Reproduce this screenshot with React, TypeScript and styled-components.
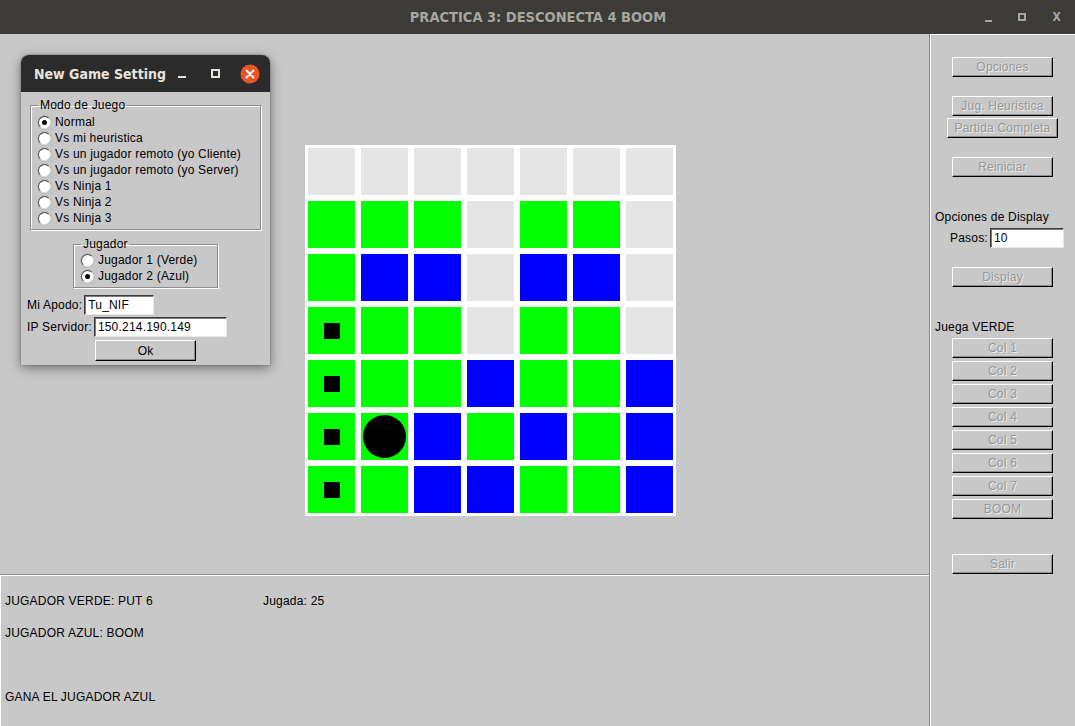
import React from 'react';
import styled, { createGlobalStyle, css } from 'styled-components';

type Cell = 'E' | 'G' | 'B';
type Mark = 'sq' | 'dot' | undefined;

const BOARD: string[] = [
  'EEEEEEE',
  'GGGEGGE',
  'GBBEBBE',
  'GGGEGGE',
  'GGGBGGB',
  'GGBGBGB',
  'GGBBGGB',
];

const MARKS: Record<string, Mark> = {
  '3-0': 'sq',
  '4-0': 'sq',
  '5-0': 'sq',
  '6-0': 'sq',
  '5-1': 'dot',
};

const MODES = [
  'Normal',
  'Vs mi heuristica',
  'Vs un jugador remoto (yo Cliente)',
  'Vs un jugador remoto (yo Server)',
  'Vs Ninja 1',
  'Vs Ninja 2',
  'Vs Ninja 3',
];

const App: React.FC = () => {
  return (
    <Screen>
      <GlobalStyle />
      <TitleBar>
        <TitleText>PRACTICA 3: DESCONECTA 4 BOOM</TitleText>
        <WinControls>
          <MinGlyph />
          <MaxGlyph />
          <CloseGlyph>X</CloseGlyph>
        </WinControls>
      </TitleBar>

      <Body>
        <LeftColumn>
          <Canvas>
            <BoardFrame>
              {BOARD.map((row, r) =>
                row.split('').map((c, col) => {
                  const mark = MARKS[`${r}-${col}`];
                  return (
                    <BoardCell key={`${r}-${col}`} $kind={c as Cell}>
                      {mark === 'sq' && <Square />}
                      {mark === 'dot' && <Disc />}
                    </BoardCell>
                  );
                })
              )}
            </BoardFrame>
          </Canvas>
          <LogPanel>
            <LogRow>
              <LogLabel>JUGADOR VERDE: PUT 6</LogLabel>
              <span>Jugada: 25</span>
            </LogRow>
            <LogRow>JUGADOR AZUL: BOOM</LogRow>
            <LogRow />
            <LogRow>GANA EL JUGADOR AZUL</LogRow>
          </LogPanel>
        </LeftColumn>

        <SidePanel>
          <TkButton $top={23}>Opciones</TkButton>
          <TkButton $top={19}>Jug. Heuristica</TkButton>
          <TkButton $top={2} $wide>Partida Completa</TkButton>
          <TkButton $top={19}>Reiniciar</TkButton>
          <SideLabel $top={33}>Opciones de Display</SideLabel>
          <PasosRow>
            <span>Pasos:</span>
            <Entry $w={74} defaultValue="10" />
          </PasosRow>
          <TkButton $top={19}>Display</TkButton>
          <SideLabel $top={33}>Juega VERDE</SideLabel>
          {[1, 2, 3, 4, 5, 6, 7].map((n) => (
            <TkButton key={n} $top={n === 1 ? 4 : 3}>
              Col {n}
            </TkButton>
          ))}
          <TkButton $top={3}>BOOM</TkButton>
          <TkButton $top={35}>Salir</TkButton>
        </SidePanel>
      </Body>

      <Dialog>
        <DialogTitleBar>
          <DialogTitle>New Game Setting</DialogTitle>
          <DialogMin />
          <DialogMax />
          <DialogClose>
            <svg width="20" height="20" viewBox="0 0 20 20">
              <circle cx="10" cy="10" r="9.5" fill="#e95420" />
              <path d="M6.5 6.5 L13.5 13.5 M13.5 6.5 L6.5 13.5" stroke="#fff" strokeWidth="2" strokeLinecap="round" />
            </svg>
          </DialogClose>
        </DialogTitleBar>
        <DialogBody>
          <Group $w={231} $padTop={2} $padBottom={3}>
            <Legend>Modo de Juego</Legend>
            {MODES.map((m, i) => (
              <RadioRow key={m}>
                <Radio $on={i === 0} />
                {m}
              </RadioRow>
            ))}
          </Group>
          <Group $w={145} $center $top={7} $padTop={1} $padBottom={3}>
            <Legend>Jugador</Legend>
            <RadioRow>
              <Radio />
              Jugador 1 (Verde)
            </RadioRow>
            <RadioRow>
              <Radio $on />
              Jugador 2 (Azul)
            </RadioRow>
          </Group>
          <FieldRow $top={7}>
            <span>Mi Apodo:</span>
            <Entry $w={70} defaultValue="Tu_NIF" />
          </FieldRow>
          <FieldRow $top={2}>
            <span>IP Servidor:</span>
            <Entry $w={133} defaultValue="150.214.190.149" />
          </FieldRow>
          <OkButton>Ok</OkButton>
        </DialogBody>
      </Dialog>
    </Screen>
  );
};

export default App;

const GlobalStyle = createGlobalStyle`
  html, body {
    margin: 0;
    padding: 0;
    background: #c8c8c8;
  }
  body {
    font-family: "Liberation Sans", Arial, sans-serif;
    font-size: 12px;
    letter-spacing: 0.2px;
    color: #000;
  }
`;

const Screen = styled.div`
  position: relative;
  width: 1075px;
  height: 726px;
  overflow: hidden;
  display: flex;
  flex-direction: column;
  background: #c8c8c8;
`;

const TitleBar = styled.div`
  height: 34px;
  flex: none;
  background: #3c3b37;
  display: flex;
  align-items: center;
  justify-content: center;
  position: relative;
`;

const TitleText = styled.div`
  font-family: "DejaVu Sans Condensed", "DejaVu Sans", sans-serif;
  font-weight: bold;
  font-size: 14.5px;
  letter-spacing: 0;
  color: #a6a6a2;
  margin-left: 1px;
`;

const WinControls = styled.div`
  position: absolute;
  right: 14px;
  top: 0;
  height: 34px;
  display: flex;
  align-items: center;
  gap: 26px;
`;

const MinGlyph = styled.span`
  width: 7px;
  height: 2px;
  margin-top: 7px;
  background: #a6a6a2;
`;

const MaxGlyph = styled.span`
  width: 4px;
  height: 4px;
  border: 2px solid #a6a6a2;
`;

const CloseGlyph = styled.span`
  font-family: "DejaVu Sans Condensed", "DejaVu Sans", sans-serif;
  font-weight: bold;
  font-size: 12px;
  color: #a6a6a2;
`;

const Body = styled.div`
  flex: 1;
  display: flex;
  min-height: 0;
`;

const LeftColumn = styled.div`
  width: 929px;
  display: flex;
  flex-direction: column;
`;

const Canvas = styled.div`
  height: 540px;
  box-sizing: border-box;
  padding: 111px 0 0 305px;
`;

const BoardFrame = styled.div`
  display: inline-grid;
  grid-template-columns: repeat(7, 47px);
  grid-auto-rows: 47px;
  gap: 6px;
  padding: 3px;
  background: #fff;
`;

const cellColors: Record<Cell, string> = {
  E: '#e5e5e5',
  G: '#00ff00',
  B: '#0000ff',
};

const BoardCell = styled.div<{ $kind: Cell }>`
  background: ${(p) => cellColors[p.$kind]};
  display: flex;
  align-items: center;
  justify-content: center;
`;

const Square = styled.div`
  width: 16px;
  height: 16px;
  background: #000;
`;

const Disc = styled.div`
  width: 43px;
  height: 43px;
  border-radius: 50%;
  background: #000;
`;

const LogPanel = styled.div`
  flex: 1;
  border-top: 1px solid #8c8c8c;
  box-shadow: inset 1px 1px 0 #fff;
  padding: 10px 0 0 5px;
`;

const LogRow = styled.div`
  height: 32px;
  display: flex;
  align-items: center;
`;

const LogLabel = styled.span`
  width: 258px;
`;

const SidePanel = styled.div`
  flex: 1;
  border-left: 1px solid #8c8c8c;
  box-shadow: inset 1px 1px 0 #fff;
  display: flex;
  flex-direction: column;
  align-items: center;
`;

const raised = css`
  box-sizing: border-box;
  background: #c8c8c8;
  border: 1px solid;
  border-color: #fff #000 #000 #fff;
  box-shadow: inset -1px -1px 0 #8c8c8c;
  font-family: "Liberation Sans", Arial, sans-serif;
  font-size: 12px;
  padding: 0;
  display: flex;
  align-items: center;
  justify-content: center;
`;

const TkButton = styled.div<{ $top: number; $wide?: boolean }>`
  ${raised};
  width: ${(p) => (p.$wide ? 111 : 101)}px;
  height: 20px;
  margin-top: ${(p) => p.$top}px;
  color: #979797;
  text-shadow: 1px 1px 0 #ececec;
`;

const SideLabel = styled.div<{ $top: number }>`
  align-self: flex-start;
  margin: ${(p) => p.$top}px 0 0 5px;
  line-height: 14px;
`;

const PasosRow = styled.div`
  align-self: flex-start;
  margin: 4px 0 0 20px;
  display: flex;
  align-items: center;
  gap: 2px;
`;

const Entry = styled.input<{ $w: number }>`
  box-sizing: border-box;
  width: ${(p) => p.$w}px;
  height: 20px;
  margin: 0;
  padding: 0 0 0 3px;
  background: #fff;
  border: 1px solid;
  border-color: #3a3a3a #e8e8e8 #e8e8e8 #3a3a3a;
  box-shadow: inset 1px 1px 0 #7a7a7a;
  font-family: "Liberation Sans", Arial, sans-serif;
  font-size: 12px;
  letter-spacing: 0.2px;
  color: #000;
  outline: none;
`;

const Dialog = styled.div`
  position: absolute;
  left: 21px;
  top: 55px;
  width: 249px;
  border-radius: 8px 8px 0 0;
  background: #c8c8c8;
  box-shadow: 0 3px 12px rgba(0, 0, 0, 0.45), 0 0 2px rgba(0, 0, 0, 0.4);
  overflow: hidden;
`;

const DialogTitleBar = styled.div`
  height: 37px;
  background: #2b2b2b;
  display: flex;
  align-items: center;
  padding: 0 0 0 13px;
`;

const DialogTitle = styled.div`
  font-family: "DejaVu Sans Condensed", "DejaVu Sans", sans-serif;
  font-weight: bold;
  font-size: 14px;
  letter-spacing: 0;
  color: #e6e3dc;
  width: 144px;
`;

const DialogMin = styled.span`
  width: 8px;
  height: 2px;
  margin-top: 6px;
  background: #e6e3dc;
`;

const DialogMax = styled.span`
  width: 5px;
  height: 5px;
  margin-left: 25px;
  border: 2px solid #e6e3dc;
`;

const DialogClose = styled.span`
  margin-left: 20px;
  display: flex;
`;

const DialogBody = styled.div`
  padding: 6px 6px 4px 6px;
  display: flex;
  flex-direction: column;
`;

const Group = styled.fieldset<{
  $w: number;
  $center?: boolean;
  $top?: number;
  $padTop: number;
  $padBottom: number;
}>`
  box-sizing: border-box;
  width: ${(p) => p.$w}px;
  margin: ${(p) => p.$top ?? 0}px 0 0 ${(p) => (p.$center ? 0 : 3)}px;
  align-self: ${(p) => (p.$center ? 'center' : 'flex-start')};
  padding: ${(p) => p.$padTop}px 0 ${(p) => p.$padBottom}px 7px;
  border: 1px solid #8c8c8c;
  box-shadow: 1px 1px 0 #fff, inset 1px 1px 0 #fff;
`;

const Legend = styled.legend`
  padding: 0 2px;
  margin-left: 0;
  line-height: 14px;
  font-size: 12px;
`;

const RadioRow = styled.div`
  height: 16px;
  display: flex;
  align-items: center;
  white-space: nowrap;
`;

const Radio = styled.span<{ $on?: boolean }>`
  box-sizing: border-box;
  width: 13px;
  height: 13px;
  margin-right: 4px;
  border-radius: 50%;
  background: #fff;
  border: 1px solid;
  border-color: #4a4a4a #dcdcdc #dcdcdc #4a4a4a;
  box-shadow: 0 0 0 1px #bcbcbc;
  display: flex;
  align-items: center;
  justify-content: center;

  &::after {
    content: '';
    width: 5px;
    height: 5px;
    border-radius: 50%;
    background: ${(p) => (p.$on ? '#000' : 'transparent')};
  }
`;

const FieldRow = styled.div<{ $top: number }>`
  margin-top: ${(p) => p.$top}px;
  display: flex;
  align-items: center;
  gap: 2px;
`;

const OkButton = styled.div`
  ${raised};
  align-self: center;
  width: 101px;
  height: 21px;
  margin-top: 3px;
  color: #000;
`;
